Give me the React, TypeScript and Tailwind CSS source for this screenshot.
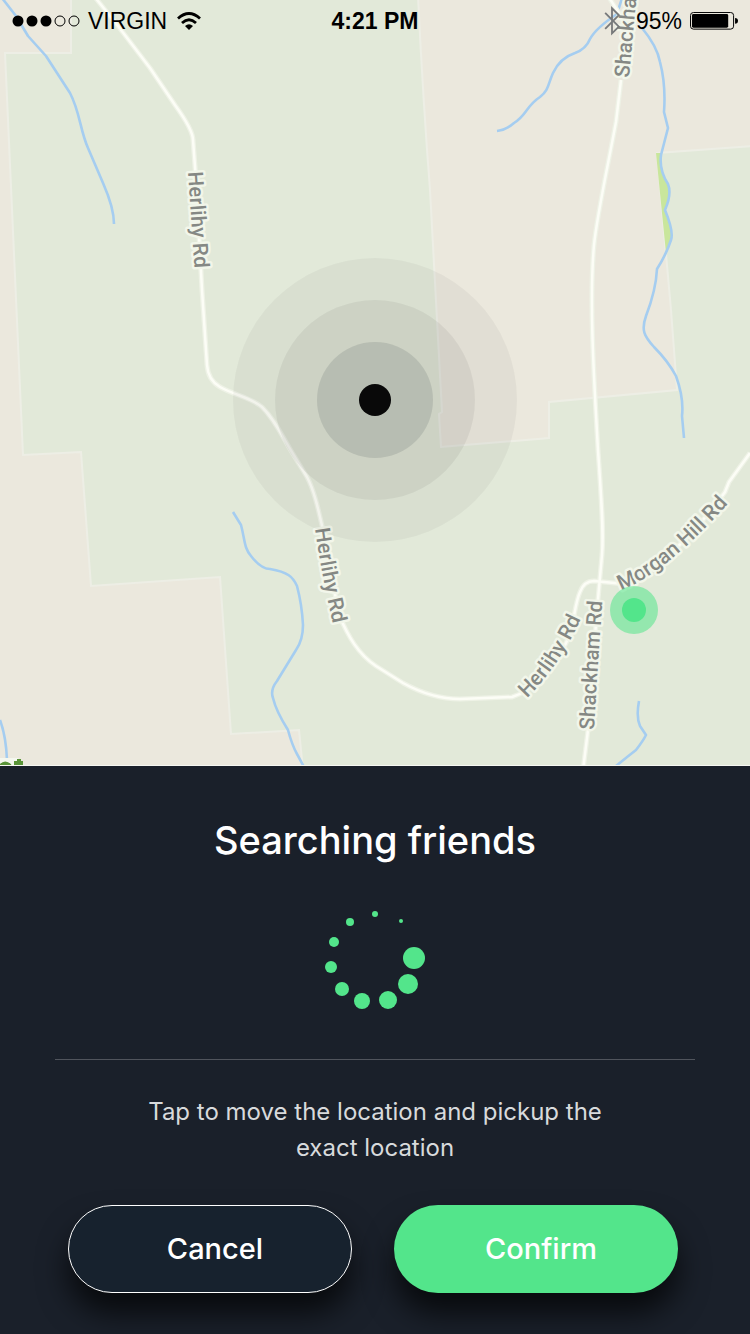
import React from "react";

type Label = { id: string; text: string; path: string };

const roads = [
  "M94 -4L118 26L150 68L175 105Q193 130 193 140L196 180L202 290L207 365Q208 380 220 387C234 395 252 398 262 407C274 419 280 432 290 449L307 477C314 490 318 508 323 530L339 615C348 636 358 654 376 666L403 683Q432 699 460 699L512 697Q528 692 538 680L565 645C574 630 574 605 580 592Q584 581 594 581L625 584C650 575 690 540 725 492L729 482L750 453",
  "M608 -4Q616 8 622 18",
  "M621 80L616 122C608 165 597 215 594 245C589 300 594 380 598 450C601 495 604 530 602 555L597 610L588 730L583 770",
];

const streams = [
  "M2 -2L16 16L28 36L46 56L70 93C80 112 80 130 88 148L103 183Q114 208 114 224",
  "M622 -2L617 14Q596 28 590 39Q586 49 575 53Q560 58 553 73C548 84 549 90 540 97C526 106 527 115 514 123Q506 130 497 131",
  "M642 28Q657 46 660 62Q666 85 664 112L668 128L661 155Q659 170 668 184Q672 194 665 210Q674 232 671 240Q666 255 657 269Q656 290 646 316C641 330 644 336 654 347Q668 361 676 376Q684 398 682 416L684 438",
  "M233 512L241 525C245 540 244 548 251 556Q261 569 270 569C288 572 293 577 297 586Q302 605 303 625Q303 640 296 650L277 681Q270 690 273 698Q276 711 288 730Q292 745 297 754L304 767",
  "M639 701Q636 717 640 726L646 735Q643 741 636 750Q627 757 616 766",
  "M0 720Q6 736 7 760",
];

const labels: Label[] = [
  { id: "herlihy-north", text: "Herlihy Rd", path: "M188 172L196 290" },
  { id: "herlihy-mid", text: "Herlihy Rd", path: "M315 529Q322 580 337 640" },
  { id: "herlihy-east", text: "Herlihy Rd", path: "M527 698Q560 666 584 612" },
  { id: "shackham-south", text: "Shackham Rd", path: "M594 730Q598 660 604 580" },
  { id: "shackham-north", text: "Shackham", path: "M629 78L640 -40" },
  { id: "morgan", text: "Morgan Hill Rd", path: "M621 590C650 580 690 548 740 490" },
];

const woodland =
  "M71 -4L418 -4Q423 100 430 190L442 412L439 414L441 447L549 438L549 402L677 390L671 310L657 153L754 146L754 770L303 770L299 730L231 734L220 577L91 586L81 452L23 455L5 53L71 53Z";

const spinner = [
  [401, 921, 2],
  [375, 914, 3],
  [350, 922, 4],
  [334, 942, 5],
  [331, 967, 6],
  [342, 989, 7],
  [362, 1001, 8],
  [388, 1000, 9],
  [408, 984, 10],
  [414, 958, 11],
];

function StatusBar() {
  return (
    <header className="absolute inset-x-0 top-0 grid h-10 grid-cols-3 items-center px-3 pt-0.5 font-['Liberation_Sans',sans-serif] text-[23px] text-black">
      <div className="flex items-center gap-2">
        <svg viewBox="0 0 68 12" className="w-17 shrink-0" role="img" aria-label="Signal">
          <circle cx="6" cy="6" r="5.5" />
          <circle cx="20" cy="6" r="5.5" />
          <circle cx="34" cy="6" r="5.5" />
          <circle cx="48" cy="6" r="5" fill="none" stroke="black" />
          <circle cx="62" cy="6" r="5" fill="none" stroke="black" />
        </svg>
        <span>VIRGIN</span>
        <svg viewBox="0 0 24 18" className="ml-0.5 w-6 shrink-0" role="img" aria-label="Wi-Fi">
          <g fill="none" stroke="black" strokeWidth="2.800">
            <path d="M1 6.500Q12 -3.500 23 6.500" />
            <path d="M5 11Q12 4.500 19 11" />
          </g>
          <path d="M8 14Q12 10.500 16 14L12 18Z" />
        </svg>
      </div>
      <span className="text-center font-bold">4:21 PM</span>
      <div className="flex items-center justify-end gap-2">
        <svg viewBox="0 0 14 26" className="mr-2 w-4 shrink-0" fill="none" stroke="#77797b" strokeWidth="1.600" role="img" aria-label="Bluetooth">
          <path d="M1 6L13 18L7 24V2L13 8L1 20" />
        </svg>
        <span>95%</span>
        <svg viewBox="0 0 49 18" className="w-12 shrink-0" role="img" aria-label="Battery">
          <rect x="0.500" y="0.500" width="44" height="17" rx="3" fill="none" stroke="black" />
          <rect x="2" y="2" width="37" height="14" rx="1.500" />
          <path d="M46 6Q49 6 49 9T46 12Z" />
        </svg>
      </div>
    </header>
  );
}

function RoadMap() {
  return (
    <svg viewBox="0 0 750 766" className="block w-full bg-[#ebe8dd]" role="img" aria-label="Map">
      <path d={woodland} fill="#e2e9d9" stroke="#edeee5" strokeWidth="2" />
      <path d="M656 153L662 153Q659 170 668 184Q672 194 665 210Q674 232 671 240L666 253Z" fill="#c9e69c" />
      <g fill="none" stroke="#a5cdf0" strokeWidth="2.600" strokeLinejoin="round">
        {streams.map((d) => (
          <path key={d} d={d} />
        ))}
      </g>
      <g fill="none" strokeLinejoin="round">
        {roads.map((d) => (
          <path key={d} d={d} stroke="#eef2e6" strokeWidth="5" />
        ))}
        {roads.map((d) => (
          <path key={d} d={d} stroke="#fcfdf6" strokeWidth="2.500" />
        ))}
      </g>
      <g fill="#858884" stroke="#f2f6ea" strokeWidth="5" strokeLinejoin="round" paintOrder="stroke" className="font-['Roboto',sans-serif] text-[21px] font-medium">
        {labels.map(({ id, text, path }) => (
          <React.Fragment key={id}>
            <path id={id} d={path} fill="none" stroke="none" />
            <text>
              <textPath href={`#${id}`}>{text}</textPath>
            </text>
          </React.Fragment>
        ))}
      </g>
      <path d="M0 758H18L24 766H0Z" fill="#f4f7ee" />
      <path d="M1 766Q5 761 10 766M19 759V766M14 763H23" fill="none" stroke="#5a9438" strokeWidth="4" />
      <path d="M0 765.500H750" stroke="#f6f7f2" />
      <circle cx="375" cy="400" r="142" fillOpacity="0.040" />
      <circle cx="375" cy="400" r="100" fillOpacity="0.055" />
      <circle cx="375" cy="400" r="58" fill="#001020" fillOpacity="0.105" />
      <circle cx="375" cy="400" r="16" fill="#090909" />
      <circle cx="634" cy="610" r="24" fill="#53e58b" fillOpacity="0.550" />
      <circle cx="634" cy="610" r="12" fill="#53e58b" />
    </svg>
  );
}

export default function App() {
  return (
    <main className="flex min-h-screen flex-col bg-[#1a202a] font-['Inter',sans-serif] text-white">
      <section className="relative">
        <StatusBar />
        <RoadMap />
      </section>
      <section className="flex grow flex-col items-center px-[55px] pt-12">
        <h1 className="text-[38px] leading-13 font-medium">Searching friends</h1>
        <svg viewBox="327 910 96 102" className="mt-11 w-24 overflow-visible fill-[#53e58b]" role="img" aria-label="Searching">
          {spinner.map(([cx, cy, r]) => (
            <circle key={r} cx={cx} cy={cy} r={r} />
          ))}
        </svg>
        <hr className="mt-[47px] w-full border-[#50545c]" />
        <p className="mt-[34px] max-w-120 text-center text-2xl leading-9 font-normal text-[#d8dadc]">
          Tap to move the location and pickup the exact location
        </p>
        <div className="mt-[39px] flex w-full justify-center gap-[42px] pr-1 text-[29px] font-medium">
          <button type="button" className="h-22 w-71 rounded-full border border-white bg-[#17222e] pl-2.5 shadow-[0_20px_30px_rgba(0,0,0,0.700)]">
            Cancel
          </button>
          <button type="button" className="h-22 w-71 rounded-full bg-[#53e58b] pl-2.5 shadow-[0_20px_30px_rgba(0,0,0,0.700)]">
            Confirm
          </button>
        </div>
      </section>
    </main>
  );
}
